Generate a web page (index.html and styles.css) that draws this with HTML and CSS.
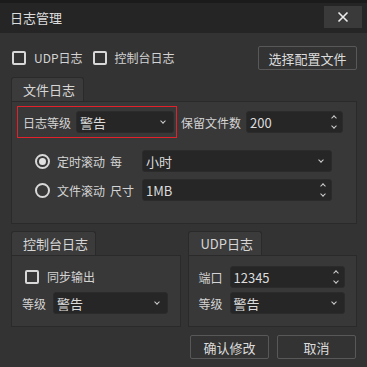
FILE: index.html
```html
<!DOCTYPE html>
<html lang="zh">
<head>
  <meta charset="UTF-8" />
  <title>日志管理</title>
  <link rel="stylesheet" href="styles.css">
</head>
<body>
  <div class="dialog">
    <div class="titlebar">
      <span class="title">日志管理</span>
      <div class="close-btn">
        <svg width="12" height="12" viewBox="0 0 12 12"><path d="M1.5 1.5L10.5 10.5M10.5 1.5L1.5 10.5" stroke="#ececec" stroke-width="1.6"/></svg>
      </div>
    </div>

    <div class="content">
      <div class="top-row">
        <label class="check"><span class="box"></span>UDP日志</label>
        <label class="check"><span class="box"></span>控制台日志</label>
        <div class="btn btn-wide">选择配置文件</div>
      </div>

      <div class="group">
        <div class="tab">文件日志</div>
        <div class="frame file-frame">
          <div class="level-row">
            <div class="highlight">
              <span class="lbl">日志等级</span>
              <div class="combo combo-level">警告<span class="chev"></span></div>
            </div>
            <span class="lbl keep-lbl">保留文件数</span>
            <div class="combo spin spin-keep">200<span class="spin-arrows"><i class="up"></i><i class="down"></i></span></div>
          </div>
          <div class="roll-row">
            <span class="radio checked"></span>
            <span class="lbl roll-lbl">定时滚动</span>
            <span class="lbl unit-lbl">每</span>
            <div class="combo combo-roll">小时<span class="chev"></span></div>
          </div>
          <div class="roll-row">
            <span class="radio"></span>
            <span class="lbl roll-lbl">文件滚动</span>
            <span class="lbl unit-lbl">尺寸</span>
            <div class="combo spin combo-roll">1MB<span class="spin-arrows"><i class="up"></i><i class="down"></i></span></div>
          </div>
        </div>
      </div>

      <div class="bottom-groups">
        <div class="group">
          <div class="tab tab-console">控制台日志</div>
          <div class="frame small-frame">
            <label class="check sync"><span class="box"></span>同步输出</label>
            <div class="field-row">
              <span class="lbl">等级</span>
              <div class="combo combo-small">警告<span class="chev"></span></div>
            </div>
          </div>
        </div>
        <div class="group">
          <div class="tab tab-udp">UDP日志</div>
          <div class="frame small-frame">
            <div class="field-row port-row">
              <span class="lbl">端口</span>
              <div class="combo spin combo-small">12345<span class="spin-arrows"><i class="up"></i><i class="down"></i></span></div>
            </div>
            <div class="field-row">
              <span class="lbl">等级</span>
              <div class="combo combo-small">警告<span class="chev"></span></div>
            </div>
          </div>
        </div>
      </div>

      <div class="actions">
        <div class="btn">确认修改</div>
        <div class="btn">取消</div>
      </div>
    </div>
  </div>
</body>
</html>
```

FILE: styles.css
```css
* {
  margin: 0;
  padding: 0;
  box-sizing: border-box;
}

body {
  font-family: "Noto Sans CJK SC", "Liberation Sans", sans-serif;
  font-size: 12px;
  background-color: #333333;
  color: #d4d4d4;
  width: 367px;
  height: 367px;
  overflow: hidden;
}

.dialog {
  border-top: 3px solid #1b1b1b;
}

.titlebar {
  height: 30px;
  background: #252525;
  display: flex;
  align-items: center;
  justify-content: space-between;
  padding: 0 5px 0 10px;
}

.title {
  font-size: 13px;
  color: #dcdcdc;
  margin-top: -2px;
}

.close-btn {
  width: 38px;
  height: 22px;
  background: #3a3a3a;
  display: flex;
  align-items: center;
  justify-content: center;
  margin-top: -3px;
}

.content {
  padding: 13px 10px 0 11px;
}

.top-row {
  display: flex;
  align-items: center;
  height: 24px;
}

.check {
  display: flex;
  align-items: center;
  line-height: 16px;
}

.check .box {
  width: 14px;
  height: 14px;
  border: 2px solid #d8d8d8;
  border-radius: 2px;
  margin: 0 8px 0 1px;
}

.top-row .check:first-child {
  margin-right: 9px;
}

.btn {
  border: 1px solid #585858;
  border-radius: 2px;
  background: #333333;
  height: 24px;
  width: 79px;
  display: flex;
  align-items: center;
  justify-content: center;
  color: #dcdcdc;
  font-size: 13px;
}

.btn-wide {
  width: 99px;
  margin-left: auto;
}

.group {
  display: flex;
  flex-direction: column;
}

.tab {
  align-self: flex-start;
  height: 24px;
  width: 73px;
  background: #3b3b3b;
  border: 1px solid #2a2a2a;
  border-bottom: none;
  border-radius: 3px 3px 0 0;
  display: flex;
  align-items: center;
  padding-left: 11px;
  color: #d6d6d6;
  font-size: 13px;
}

.content > .group {
  margin-top: 7px;
}

.frame {
  background: #383838;
  border: 1px solid #2a2a2a;
}

.file-frame {
  height: 123px;
  padding: 4px 0 0 5px;
}

.level-row {
  display: flex;
  align-items: center;
}

.highlight {
  display: flex;
  align-items: center;
  border: 1px solid #e4212b;
  height: 32px;
  width: 160px;
  padding-left: 5px;
}

.lbl {
  white-space: nowrap;
}

.combo {
  background: #262626;
  border: 1px solid #2b2b2b;
  border-radius: 3px;
  height: 22px;
  display: flex;
  align-items: center;
  padding-left: 3px;
  position: relative;
  color: #dcdcdc;
  font-size: 13px;
}

.combo-level {
  width: 98px;
  margin-left: 5px;
}

.keep-lbl {
  margin-left: 4px;
}

.spin-keep {
  width: 97px;
  margin-left: 5px;
}

.chev {
  position: absolute;
  right: 8px;
  top: 7px;
  width: 4px;
  height: 4px;
  border-right: 1px solid #cfcfcf;
  border-bottom: 1px solid #cfcfcf;
  transform: rotate(45deg);
}

.spin-arrows {
  position: absolute;
  right: 6px;
  top: 4px;
  display: flex;
  flex-direction: column;
  gap: 6px;
}

.spin-arrows i {
  display: block;
  width: 4px;
  height: 4px;
  border-right: 1px solid #cfcfcf;
  border-bottom: 1px solid #cfcfcf;
}

.spin-arrows .up {
  transform: rotate(-135deg);
}

.spin-arrows .down {
  transform: rotate(45deg);
  margin-top: -2px;
}

.roll-row {
  display: flex;
  align-items: center;
  padding-left: 18px;
  height: 22px;
}

.level-row + .roll-row {
  margin-top: 12px;
}

.roll-row + .roll-row {
  margin-top: 7px;
}

.radio {
  width: 15px;
  height: 15px;
  border: 2px solid #d8d8d8;
  border-radius: 50%;
  display: flex;
  align-items: center;
  justify-content: center;
}

.radio.checked::after {
  content: "";
  width: 7px;
  height: 7px;
  border-radius: 50%;
  background: #e0e0e0;
}

.roll-lbl {
  margin-left: 7px;
}

.unit-lbl {
  margin-left: 5px;
  width: 32px;
}

.combo-roll {
  width: 190px;
}

.bottom-groups {
  display: flex;
  gap: 7px;
  margin-top: 7px;
}

.bottom-groups .group {
  flex: 1;
}

.tab-console {
  width: 85px;
  padding-left: 11px;
}

.tab-udp {
  width: 74px;
  padding-left: 12px;
}

.small-frame {
  height: 72px;
  padding: 10px 0 0 10px;
}

.sync {
  height: 22px;
  padding-left: 3px;
}

.sync .box {
  margin-left: 0;
}

.field-row {
  display: flex;
  align-items: center;
  margin-top: 4px;
}

.port-row {
  margin-top: 0;
}

.field-row .lbl {
  width: 31px;
}

.combo-small {
  width: 115px;
}

.actions {
  display: flex;
  justify-content: flex-end;
  gap: 8px;
  margin-top: 8px;
  padding-right: 1px;
}
```
